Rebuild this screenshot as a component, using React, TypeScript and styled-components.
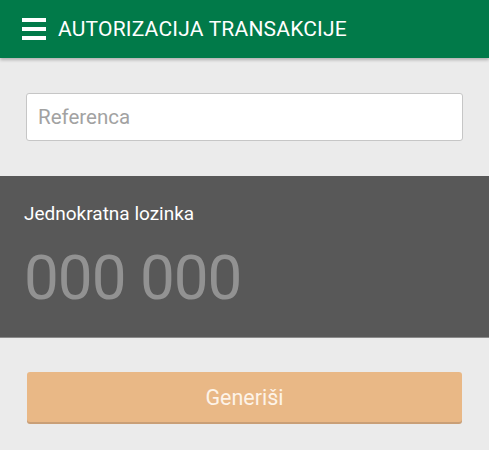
import React from 'react'
import styled, { createGlobalStyle } from 'styled-components'

const GlobalStyle = createGlobalStyle`
  html, body {
    margin: 0;
    padding: 0;
    background: #ebebeb;
    font-family: Roboto, 'Liberation Sans', sans-serif;
  }
`

const Page = styled.div`
  width: 489px;
  height: 450px;
  overflow: hidden;
  background: #ebebeb;
`

const Toolbar = styled.header`
  height: 58px;
  display: flex;
  align-items: center;
  padding: 0 22px;
  background: #017a49;
  box-shadow: 0 2px 3px rgba(0, 0, 0, 0.25);
  position: relative;
  z-index: 1;
`

const MenuIcon = styled.svg`
  width: 24px;
  height: 22px;
  margin-right: 12px;
  flex-shrink: 0;
`

const Title = styled.h1`
  margin: 0;
  font-size: 21px;
  font-weight: 400;
  color: #ffffff;
  letter-spacing: 0.2px;
`

const Form = styled.section`
  padding: 35px 26px 35px 26px;
`

const Input = styled.input`
  box-sizing: border-box;
  width: 100%;
  height: 48px;
  padding: 0 11px;
  border: 1px solid #c6c6c6;
  border-radius: 3px;
  background: #ffffff;
  font-family: Roboto, 'Liberation Sans', sans-serif;
  font-size: 20.5px;
  color: #333;
  outline: none;

  &::placeholder {
    color: #a2a2a2;
  }
`

const CodePanel = styled.section`
  height: 162px;
  box-sizing: border-box;
  padding: 28px 24px 0;
  background: #585858;
  border-bottom: 1px solid #8a8a8a;
`

const Label = styled.div`
  font-size: 19px;
  color: #ffffff;
  line-height: 20px;
`

const Code = styled.div`
  margin-top: 19px;
  font-size: 62px;
  line-height: 70px;
  letter-spacing: -1px;
  color: #929292;
`

const Actions = styled.section`
  padding: 34px 27px 0;
`

const Button = styled.button`
  width: 100%;
  height: 50px;
  border: none;
  border-radius: 3px;
  background: #e9b886;
  box-shadow: 0 2px 0 #c99f77;
  font-family: Roboto, 'Liberation Sans', sans-serif;
  font-size: 21.5px;
  color: #fdf3e8;
  cursor: pointer;
`

export default function App() {
  return (
    <Page>
      <GlobalStyle />
      <Toolbar>
        <MenuIcon viewBox="0 0 24 22">
          <rect x="0" y="0" width="24" height="4" fill="#fff" />
          <rect x="0" y="9" width="24" height="4" fill="#fff" />
          <rect x="0" y="18" width="24" height="4" fill="#fff" />
        </MenuIcon>
        <Title>AUTORIZACIJA TRANSAKCIJE</Title>
      </Toolbar>
      <Form>
        <Input placeholder="Referenca" />
      </Form>
      <CodePanel>
        <Label>Jednokratna lozinka</Label>
        <Code>000 000</Code>
      </CodePanel>
      <Actions>
        <Button>Generiši</Button>
      </Actions>
    </Page>
  )
}
